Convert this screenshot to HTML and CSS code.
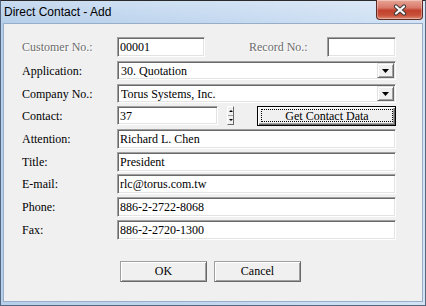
FILE: index.html
```html
<!DOCTYPE html>
<html>
<head>
<meta charset="utf-8">
<link rel="stylesheet" href="styles.css">
</head>
<body>
<div class="window">
  <div class="titlebar">
    <span class="title">Direct Contact - Add</span>
    <div class="close">
      <svg width="14" height="12" viewBox="0 0 14 12">
        <path d="M3 2.5 L11 9.5 M11 2.5 L3 9.5" stroke="#3c3c3c" stroke-width="4.2" stroke-linecap="round"/>
        <path d="M3 2.5 L11 9.5 M11 2.5 L3 9.5" stroke="#ffffff" stroke-width="2.2" stroke-linecap="round"/>
      </svg>
    </div>
  </div>
  <div class="client">
    <div class="form">
      <div class="label disabled">Customer No.:</div>
      <div class="field">
        <div class="input w88">00001</div>
        <div class="label disabled rec">Record No.:</div>
        <div class="input w69"></div>
      </div>

      <div class="label">Application:</div>
      <div class="field">
        <div class="select"><span class="val">30. Quotation</span><span class="arrow"><svg width="7" height="4" viewBox="0 0 7 4"><polygon points="0,0 7,0 3.5,4" fill="#000"/></svg></span></div>
      </div>

      <div class="label">Company No.:</div>
      <div class="field">
        <div class="select"><span class="val">Torus Systems, Inc.</span><span class="arrow"><svg width="7" height="4" viewBox="0 0 7 4"><polygon points="0,0 7,0 3.5,4" fill="#000"/></svg></span></div>
      </div>

      <div class="label">Contact:</div>
      <div class="field">
        <div class="input w101">37</div>
        <div class="spinner"><span class="up"></span><span class="down"></span></div>
        <div class="btn default"><span class="focus">Get Contact Data</span></div>
      </div>

      <div class="label">Attention:</div>
      <div class="field"><div class="input full">Richard L. Chen</div></div>

      <div class="label">Title:</div>
      <div class="field"><div class="input full">President</div></div>

      <div class="label">E-mail:</div>
      <div class="field"><div class="input full">rlc@torus.com.tw</div></div>

      <div class="label">Phone:</div>
      <div class="field"><div class="input full">886-2-2722-8068</div></div>

      <div class="label">Fax:</div>
      <div class="field"><div class="input full">886-2-2720-1300</div></div>
    </div>
    <div class="actions">
      <div class="btn push">OK</div>
      <div class="btn push">Cancel</div>
    </div>
  </div>
</div>
</body>
</html>
```
FILE: styles.css
```css
* { box-sizing: border-box; }
html, body { margin: 0; padding: 0; }
body {
  width: 426px;
  height: 306px;
  overflow: hidden;
  background: #ffffff;
  font-family: "Liberation Serif", "Times New Roman", serif;
  font-size: 12px;
  color: #000;
}
.window {
  position: relative;
  width: 426px;
  height: 306px;
  display: flex;
  flex-direction: column;
  background: linear-gradient(to right, #b6cfea 0%, #c4d9f0 55%, #d3e3f5 100%);
  border: 1px solid #55677f;
  border-top-color: #2a2a2a;
}
.titlebar {
  height: 22px;
  flex: none;
  padding-left: 3px;
  display: flex;
  align-items: center;
  background: linear-gradient(to bottom, rgba(255,255,255,0.25), rgba(255,255,255,0));
}
.title {
  font-family: "Liberation Sans", Arial, sans-serif;
  font-size: 12px;
  color: #000;
  line-height: 22px;
}
.close {
  position: absolute;
  top: -1px;
  right: 2px;
  width: 47px;
  height: 20px;
  border: 1px solid #5c2a22;
  border-top: none;
  border-radius: 0 0 4px 4px;
  background: linear-gradient(to bottom, #e8a595 0%, #d9796a 40%, #c2412c 55%, #c8503a 80%, #de8a70 100%);
  box-shadow: inset 0 0 0 1px rgba(255,255,255,0.35);
  display: flex;
  align-items: center;
  justify-content: center;
}
.client {
  flex: 1;
  margin: 0 2px 3px 2px;
  background: #f0f0f0;
  border: 1px solid #98aec8;
}
.form {
  display: grid;
  grid-template-columns: 95px auto;
  grid-template-rows: 24px 23px 22px 23px 23px 22px 23px 23px 20px;
  padding: 13px 0 0 18px;
  align-items: start;
}
.label {
  height: 20px;
  line-height: 20px;
  white-space: nowrap;
}
.label.disabled {
  color: #6d6d6d;
  text-shadow: 1px 1px 0 #ffffff;
}
.field {
  display: flex;
  align-items: flex-start;
}
.rec {
  margin-left: 44px;
  width: 78px;
}
.input {
  height: 20px;
  background: #ffffff;
  border-style: solid;
  border-width: 1px;
  border-color: #a0a0a0 #ffffff #ffffff #a0a0a0;
  box-shadow: inset 1px 1px 0 #696969, inset -1px -1px 0 #e3e3e3;
  padding: 1px 2px 0 2px;
  line-height: 17px;
  white-space: nowrap;
  overflow: hidden;
}
.w88 { width: 88px; }
.w69 { width: 69px; }
.w101 { width: 101px; height: 19px; }
.full { width: 279px; }
.select {
  width: 279px;
  height: 19px;
  display: flex;
  align-items: stretch;
  background: #ffffff;
  border-style: solid;
  border-width: 1px;
  border-color: #a0a0a0 #ffffff #ffffff #a0a0a0;
  box-shadow: inset 1px 1px 0 #696969, inset -1px -1px 0 #e3e3e3;
  padding: 1px 1px 1px 1px;
}
.val {
  flex: 1;
  padding-left: 2px;
  line-height: 16px;
  white-space: nowrap;
}
.arrow {
  width: 17px;
  flex: none;
  background: #f0f0f0;
  border-style: solid;
  border-width: 1px;
  border-color: #e3e3e3 #696969 #696969 #e3e3e3;
  box-shadow: inset 1px 1px 0 #ffffff, inset -1px -1px 0 #a0a0a0;
  display: flex;
  align-items: center;
  justify-content: center;
}
.spinner {
  margin-left: 9px;
  width: 7px;
  height: 19px;
  display: flex;
  flex-direction: column;
  background: #f0f0f0;
  border-style: solid;
  border-width: 1px;
  border-color: #ffffff #696969 #696969 #ffffff;
}
.spinner span {
  flex: 1;
  display: flex;
  align-items: center;
  justify-content: center;
}
.spinner .up { border-bottom: 1px solid #a0a0a0; }
.spinner .up::after {
  content: "";
  border-left: 2px solid transparent;
  border-right: 2px solid transparent;
  border-bottom: 2px solid #000;
}
.spinner .down::after {
  content: "";
  border-left: 2px solid transparent;
  border-right: 2px solid transparent;
  border-top: 2px solid #000;
}
.btn {
  display: flex;
  align-items: center;
  justify-content: center;
  background: #f0f0f0;
  white-space: nowrap;
}
.btn.default {
  margin-left: 23px;
  width: 139px;
  height: 20px;
  border: 1px solid #000;
  box-shadow: inset 1px 1px 0 #ffffff, inset -1px -1px 0 #696969, inset -2px -2px 0 #a0a0a0;
  padding: 2px 2px 3px 3px;
}
.focus {
  flex: 1;
  height: 100%;
  border: 1px dotted #000;
  display: flex;
  align-items: center;
  justify-content: center;
  line-height: 12px;
}
.actions {
  display: flex;
  gap: 7px;
  padding-left: 116px;
  margin-top: 21px;
}
.btn.push {
  width: 87px;
  height: 21px;
  border-style: solid;
  border-width: 1px;
  border-color: #a0a0a0 #696969 #696969 #a0a0a0;
  box-shadow: inset 1px 1px 0 #ffffff, inset -1px -1px 0 #a0a0a0;
}
```
